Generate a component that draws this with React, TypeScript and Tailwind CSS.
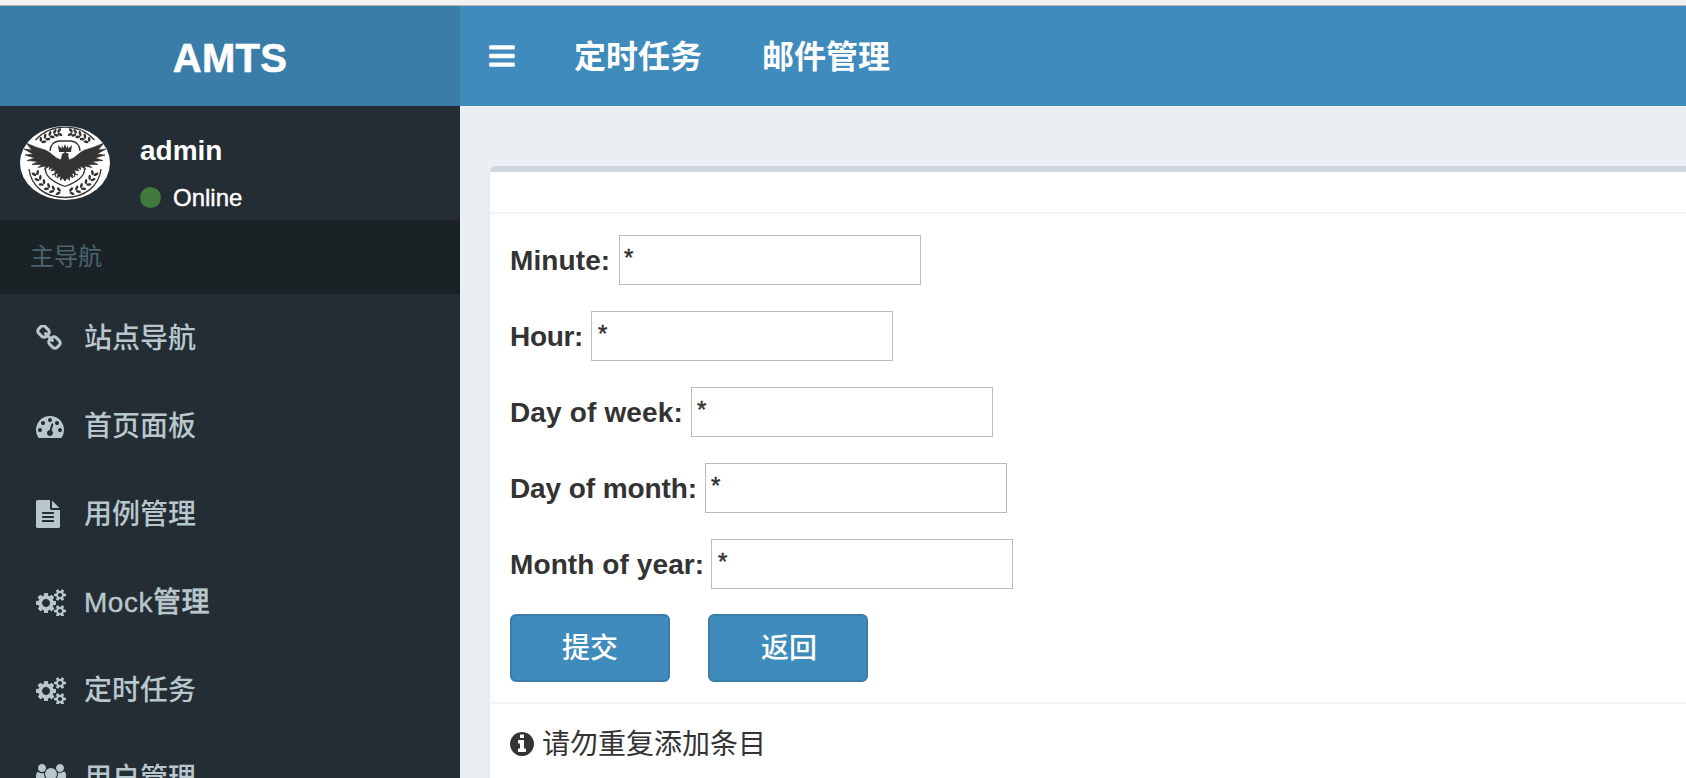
import React from "react";

const ICONS = {
  bars: "M1664 1344v128q0 26-19 45t-45 19h-1408q-26 0-45-19t-19-45v-128q0-26 19-45t45-19h1408q26 0 45 19t19 45zm0-512v128q0 26-19 45t-45 19h-1408q-26 0-45-19t-19-45v-128q0-26 19-45t45-19h1408q26 0 45 19t19 45zm0-512v128q0 26-19 45t-45 19h-1408q-26 0-45-19t-19-45v-128q0-26 19-45t45-19h1408q26 0 45 19t19 45z",
  link: "M1520 1216q0-40-28-68l-208-208q-28-28-68-28-42 0-72 32 3 3 19 18.5t21.5 21.5 15 19 13 25.5 3.5 27.5q0 40-28 68t-68 28q-15 0-27.5-3.5t-25.5-13-19-15-21.5-21.5-18.5-19q-33 31-33 73 0 40 28 68l206 207q27 27 68 27 40 0 68-26l147-146q28-28 28-67zm-703-705q0-40-28-68l-206-207q-28-28-68-28-39 0-68 27l-147 146q-28 28-28 67 0 40 28 68l208 208q27 27 68 27 42 0 72-31-3-3-19-18.5t-21.5-21.5-15-19-13-25.5-3.5-27.5q0-40 28-68t68-28q15 0 27.5 3.5t25.5 13 19 15 21.5 21.5 18.5 19q33-31 33-73zm895 705q0 120-85 203l-147 146q-83 83-203 83-121 0-204-85l-206-207q-83-83-83-203 0-123 88-209l-88-88q-86 88-208 88-120 0-204-84l-208-208q-84-84-84-204t85-203l147-146q83-83 203-83 121 0 204 85l206 207q83 83 83 203 0 123-88 209l88 88q86-88 208-88 120 0 204 84l208 208q84 84 84 204z",
  dashboard: "M384 1152q0-53-37.5-90.5t-90.5-37.5-90.5 37.5-37.5 90.5 37.5 90.5 90.5 37.5 90.5-37.5 37.5-90.5zm192-448q0-53-37.5-90.5t-90.5-37.5-90.5 37.5-37.5 90.5 37.5 90.5 90.5 37.5 90.5-37.5 37.5-90.5zm428 481l101-382q6-26-7.5-48.5t-38.5-29.5-48 6.5-30 39.5l-101 382q-60 5-107 43.5t-63 98.5q-20 77 20 146t117 89 146-20 89-117q16-60-6-117t-72-91zm660-33q0-53-37.5-90.5t-90.5-37.5-90.5 37.5-37.5 90.5 37.5 90.5 90.5 37.5 90.5-37.5 37.5-90.5zm-640-640q0-53-37.5-90.5t-90.5-37.5-90.5 37.5-37.5 90.5 37.5 90.5 90.5 37.5 90.5-37.5 37.5-90.5zm448 192q0-53-37.5-90.5t-90.5-37.5-90.5 37.5-37.5 90.5 37.5 90.5 90.5 37.5 90.5-37.5 37.5-90.5zm320 448q0 261-141 483-19 29-54 29h-1402q-35 0-54-29-141-221-141-483 0-182 71-348t191-286 286-191 348-71 348 71 286 191 191 286 71 348z",
  file: "M1596 476q14 14 28 36h-472v-472q22 14 36 28zm-476 164h544v1056q0 40-28 68t-68 28h-1344q-40 0-68-28t-28-68v-1600q0-40 28-68t68-28h800v544q0 40 28 68t68 28zm160 736v-64q0-14-9-23t-23-9h-704q-14 0-23 9t-9 23v64q0 14 9 23t23 9h704q14 0 23-9t9-23zm0-256v-64q0-14-9-23t-23-9h-704q-14 0-23 9t-9 23v64q0 14 9 23t23 9h704q14 0 23-9t9-23zm0-256v-64q0-14-9-23t-23-9h-704q-14 0-23 9t-9 23v64q0 14 9 23t23 9h704q14 0 23-9t9-23z",
  cogs: "M896 960q0-106-75-181t-181-75-181 75-75 181 75 181 181 75 181-75 75-181zm768 512q0-52-38-90t-90-38-90 38-38 90q0 53 37.5 90.5t90.5 37.5 90.5-37.5 37.5-90.5zm0-1024q0-52-38-90t-90-38-90 38-38 90q0 53 37.5 90.5t90.5 37.5 90.5-37.5 37.5-90.5zm-384 421v185q0 10-7 19.5t-16 10.5l-155 24q-11 35-32 76 34 48 90 115 7 11 7 20 0 12-7 19-23 30-82.5 89.5t-78.5 59.5q-11 0-21-7l-115-90q-37 19-77 31-11 108-23 155-7 24-30 24h-186q-11 0-20-7.5t-10-17.5l-23-153q-34-10-75-31l-118 89q-7 7-20 7-11 0-21-8-144-133-144-160 0-9 7-19 10-14 41-53t47-61q-23-44-35-82l-152-24q-10-1-17-9.5t-7-19.5v-185q0-10 7-19.5t16-10.5l155-24q11-35 32-76-34-48-90-115-7-11-7-20 0-12 7-20 22-30 82-89t79-59q11 0 21 7l115 90q34-18 77-32 11-108 23-154 7-24 30-24h186q11 0 20 7.5t10 17.5l23 153q34 10 75 31l118-89q8-7 20-7 11 0 21 8 144 133 144 160 0 8-7 19-12 16-42 54t-45 60q23 48 34 82l152 23q10 2 17 10.5t7 19.5zm640 533v140q0 16-149 31-12 27-30 52 51 113 51 138 0 4-4 7-122 71-124 71-8 0-46-47t-52-68q-20 2-30 2t-30-2q-14 21-52 68t-46 47q-2 0-124-71-4-3-4-7 0-25 51-138-18-25-30-52-149-15-149-31v-140q0-16 149-31 13-29 30-52-51-113-51-138 0-4 4-7 4-2 35-20t59-34 30-16q8 0 46 46.5t52 67.5q20-2 30-2t30 2q51-71 92-112l6-2q4 0 124 70 4 3 4 7 0 25-51 138 17 23 30 52 149 15 149 31zm0-1024v140q0 16-149 31-12 27-30 52 51 113 51 138 0 4-4 7-122 71-124 71-8 0-46-47t-52-68q-20 2-30 2t-30-2q-14 21-52 68t-46 47q-2 0-124-71-4-3-4-7 0-25 51-138-18-25-30-52-149-15-149-31v-140q0-16 149-31 13-29 30-52-51-113-51-138 0-4 4-7 4-2 35-20t59-34 30-16q8 0 46 46.5t52 67.5q20-2 30-2t30 2q51-71 92-112l6-2q4 0 124 70 4 3 4 7 0 25-51 138 17 23 30 52 149 15 149 31z",
  users: "M593 896q-162 5-265 128h-134q-82 0-138-40.5t-56-118.5q0-353 124-353 6 0 43.5 21t97.5 42.5 119 21.5q67 0 133-23-5 37-5 66 0 159 90 287zm1071 637q0 120-73 189.5t-194 69.5h-874q-121 0-194-69.5t-73-189.5q0-53 3.5-103.5t14-109 26.5-108.5 43-97.5 62-81 85.5-53.5 111.5-20q10 0 43 21.5t73 48 107 48 135 21.5 135-21.5 107-48 73-48 43-21.5q61 0 111.5 20t85.5 53.5 62 81 43 97.5 26.5 108.5 14 109 3.5 103.5zm-1024-1277q0 106-75 181t-181 75-181-75-75-181 75-181 181-75 181 75 75 181zm704 384q0 159-112.5 271.5t-271.5 112.5-271.5-112.5-112.5-271.5 112.5-271.5 271.5-112.5 271.5 112.5 112.5 271.5zm576 225q0 78-56 118.5t-138 40.5h-134q-103-123-265-128 90-128 90-287 0-29-5-66 66 23 133 23 59 0 119-21.5t97.5-42.5 43.5-21q124 0 124 353zm-128-609q0 106-75 181t-181 75-181-75-75-181 75-181 181-75 181 75 75 181z",
  info: "M1152 1376v-160q0-14-9-23t-23-9h-96v-512q0-14-9-23t-23-9h-320q-14 0-23 9t-9 23v160q0 14 9 23t23 9h96v320h-96q-14 0-23 9t-9 23v160q0 14 9 23t23 9h448q14 0 23-9t9-23zm-128-896v-160q0-14-9-23t-23-9h-192q-14 0-23 9t-9 23v160q0 14 9 23t23 9h192q14 0 23-9t9-23zm640 416q0 209-103 385.5t-279.5 279.5-385.5 103-385.5-103-279.5-279.5-103-385.5 103-385.5 279.5-279.5 385.5-103 385.5 103 279.5 279.5 103 385.5z",
};

type IconName = keyof typeof ICONS;

function Icon({ name, viewBox, className }: { name: IconName; viewBox: string; className: string }) {
  return (
    <svg viewBox={viewBox} className={className} fill="currentColor" aria-hidden="true">
      <path d={ICONS[name]} />
    </svg>
  );
}

const UPPER_LEAVES = [
  [22, 15, -50], [26, 12, -42], [30.5, 9.5, -32], [35, 7.5, -22], [39, 6.5, -12],
];
const LOWER_LEAVES = [
  [16, 48, 66], [19, 53, 56], [23, 57.5, 45], [28, 61.5, 34], [33, 64, 24], [39, 65.5, 12],
];

function Sprig({ x, y, angle }: { x: number; y: number; angle: number }) {
  return (
    <g transform={`translate(${x} ${y}) rotate(${angle})`}>
      <ellipse cx="0.6" cy="-2" rx="2.6" ry="1.3" transform="rotate(-38 0.6 -2)" />
      <ellipse cx="0.6" cy="2" rx="2.6" ry="1.3" transform="rotate(38 0.6 2)" />
    </g>
  );
}

function HalfEmblem() {
  return (
    <g fill="#353332">
      <path d="M45 1.2C33 1.2 23 6 15.5 14M45 71.5C25 71.5 11 60 9 43M45 15H39Q30.5 16 30 25M25.5 43Q25 53 45 60.500" fill="none" stroke="#353332" strokeWidth="1.3" />
      {UPPER_LEAVES.map(([x, y, a]) => <Sprig key={x} x={x} y={y} angle={a} />)}
      {LOWER_LEAVES.map(([x, y, a]) => <Sprig key={x} x={x} y={y} angle={a + 180} />)}
      <path
        d="M45 55L42.8 52 40.5 54.5 40.2 50 37 52 38 47 34.5 48 35.5 44 31 45 33 41.500 29 43.500 30 40 24 43.500 26 40 18 41.500 22 38.500 12 38.500 18 35.500 7 34.500 15 32 5 29 13 28 4 23 12 24 6 17Q17 22 25 24C31 26 34 32 41 34L42.500 28 45 26.500Z"
        stroke="#353332"
        strokeWidth="0.7"
        strokeLinejoin="round"
      />
      <path d="M38 19L41.500 22.500 42 19.500 43.500 22 45 18V26H39Z" />
      <path d="M38 44L35 48 32 49M35 48L36 51" fill="none" stroke="#353332" strokeWidth="1.2" />
    </g>
  );
}

function Avatar() {
  return (
    <svg viewBox="0 0 90 74" className="h-[74px] w-[90px] shrink-0 rounded-[50%] bg-white" aria-hidden="true">
      <HalfEmblem />
      <g transform="translate(90 0) scale(-1 1)">
        <HalfEmblem />
      </g>
      <path d="M43 29Q44 26 47.500 27L49 29 46 29.500 46 34H42Z" fill="#353332" />
    </svg>
  );
}

const MENU: { label: string; icon: IconName; viewBox: string; size: string; text?: string }[] = [
  { label: "站点导航", icon: "link", viewBox: "64 64 1664 1664", size: "h-[26px] w-[26px]" },
  { label: "首页面板", icon: "dashboard", viewBox: "0 0 1792 1792", size: "h-7 w-7" },
  { label: "用例管理", icon: "file", viewBox: "128 0 1536 1792", size: "h-7 w-6" },
  { label: "Mock管理", icon: "cogs", viewBox: "0 0 1920 1792", size: "h-7 w-[30px]", text: "tracking-[0.5px] [-webkit-text-stroke:0.4px]" },
  { label: "定时任务", icon: "cogs", viewBox: "0 0 1920 1792", size: "h-7 w-[30px]" },
  { label: "用户管理", icon: "users", viewBox: "0 0 1920 1792", size: "h-7 w-[30px]" },
];

const FIELDS = [
  { label: "Minute:", width: "w-[109px]", tracking: "tracking-[0.1px]", pad: "pl-1" },
  { label: "Hour:", width: "w-[81px]", tracking: "tracking-[-0.3px]", pad: "pl-1.5" },
  { label: "Day of week:", width: "w-[181px]", tracking: "tracking-[0.15px]", pad: "pl-[5px]" },
  { label: "Day of month:", width: "w-[195px]", tracking: "tracking-[-0.1px]", pad: "pl-[5px]" },
  { label: "Month of year:", width: "w-[201px]", tracking: "tracking-[0.1px]", pad: "pl-1.5" },
];

export default function App() {
  return (
    <div className="flex h-[778px] w-full flex-col overflow-hidden bg-[#ebeef3] font-['Liberation_Sans','Noto_Sans_CJK_SC',sans-serif] text-[28px] text-[#333]">
      <div className="h-1.5 shrink-0 border-b border-[#b5b5b5] bg-[#f2f2f2]" />
      <header className="flex h-[100px] shrink-0 bg-[#3f8bbc] font-bold text-white">
        <div className="flex w-[460px] shrink-0 items-center justify-center bg-[#397da8] pt-1 text-[40px] leading-none tracking-[0.3px] [-webkit-text-stroke:0.6px]">
          AMTS
        </div>
        <nav className="flex items-center pl-[29px] text-[32px] leading-none">
          <Icon name="bars" viewBox="128 0 1536 1792" className="h-[30px] w-[26px]" />
          <a className="ml-[59px] pt-0.5">定时任务</a>
          <a className="ml-[60px] pt-0.5">邮件管理</a>
        </nav>
      </header>
      <div className="flex min-h-0 flex-1">
        <aside className="w-[460px] shrink-0 overflow-hidden bg-[#242d33]">
          <div className="flex h-[114px] gap-[30px] pl-5 pt-5 text-white">
            <Avatar />
            <div className="pt-[11px]">
              <div className="font-bold leading-7">admin</div>
              <div className="mt-[21px] flex h-6 items-center gap-3 text-2xl leading-6 [-webkit-text-stroke:0.4px]">
                <span className="mb-0.5 h-[21px] w-[21px] rounded-full bg-[#407a3d]" />
                Online
              </div>
            </div>
          </div>
          <div className="flex h-[74px] items-center bg-[#1b2226] pl-[30px] text-2xl text-[#4b646f]">主导航</div>
          <ul className="font-medium text-[#b8c7ce]">
            {MENU.map((item, i) => (
              <li key={i} className="flex h-[88px] items-center pl-9">
                <span className="flex w-12 shrink-0">
                  <Icon name={item.icon} viewBox={item.viewBox} className={item.size} />
                </span>
                <span className={`pt-0.5 ${item.text ?? ""}`}>{item.label}</span>
              </li>
            ))}
          </ul>
        </aside>
        <main className="min-w-0 flex-1 pl-[30px] pt-[60px]">
          <section className="h-[640px] rounded-tl-md border-t-[6px] border-[#d1d5de] bg-white shadow-[0_2px_2px_rgba(0,0,0,0.1)]">
            <div className="h-[42px] border-b-2 border-[#f4f4f4]" />
            <form className="flex h-[490px] flex-col border-b-2 border-[#f4f4f4] pl-5 pt-[21px]">
              {FIELDS.map((f) => (
                <div key={f.label} className="flex h-[76px] items-start">
                  <label className={`${f.width} ${f.tracking} shrink-0 whitespace-nowrap font-bold leading-[52px]`}>{f.label}</label>
                  <input
                    defaultValue="*"
                    className={`${f.pad} h-[50px] w-[302px] border border-[#bbb] bg-white pb-1 text-2xl text-[#333] outline-none [-webkit-text-stroke:0.5px]`}
                  />
                </div>
              ))}
              <div className="-mt-px flex gap-[38px] font-medium text-white">
                <button type="button" className="h-[68px] w-[160px] rounded-md border-2 border-[#397da8] bg-[#3f8bbc] pt-0.5">提交</button>
                <button type="button" className="h-[68px] w-[160px] rounded-md border-2 border-[#397da8] bg-[#3f8bbc] pl-0.5 pt-0.5">返回</button>
              </div>
            </form>
            <div className="flex h-20 items-center gap-2 pl-5">
              <Icon name="info" viewBox="128 128 1536 1536" className="h-6 w-6" />
              <span className="pt-0.5">请勿重复添加条目</span>
            </div>
          </section>
        </main>
      </div>
    </div>
  );
}
